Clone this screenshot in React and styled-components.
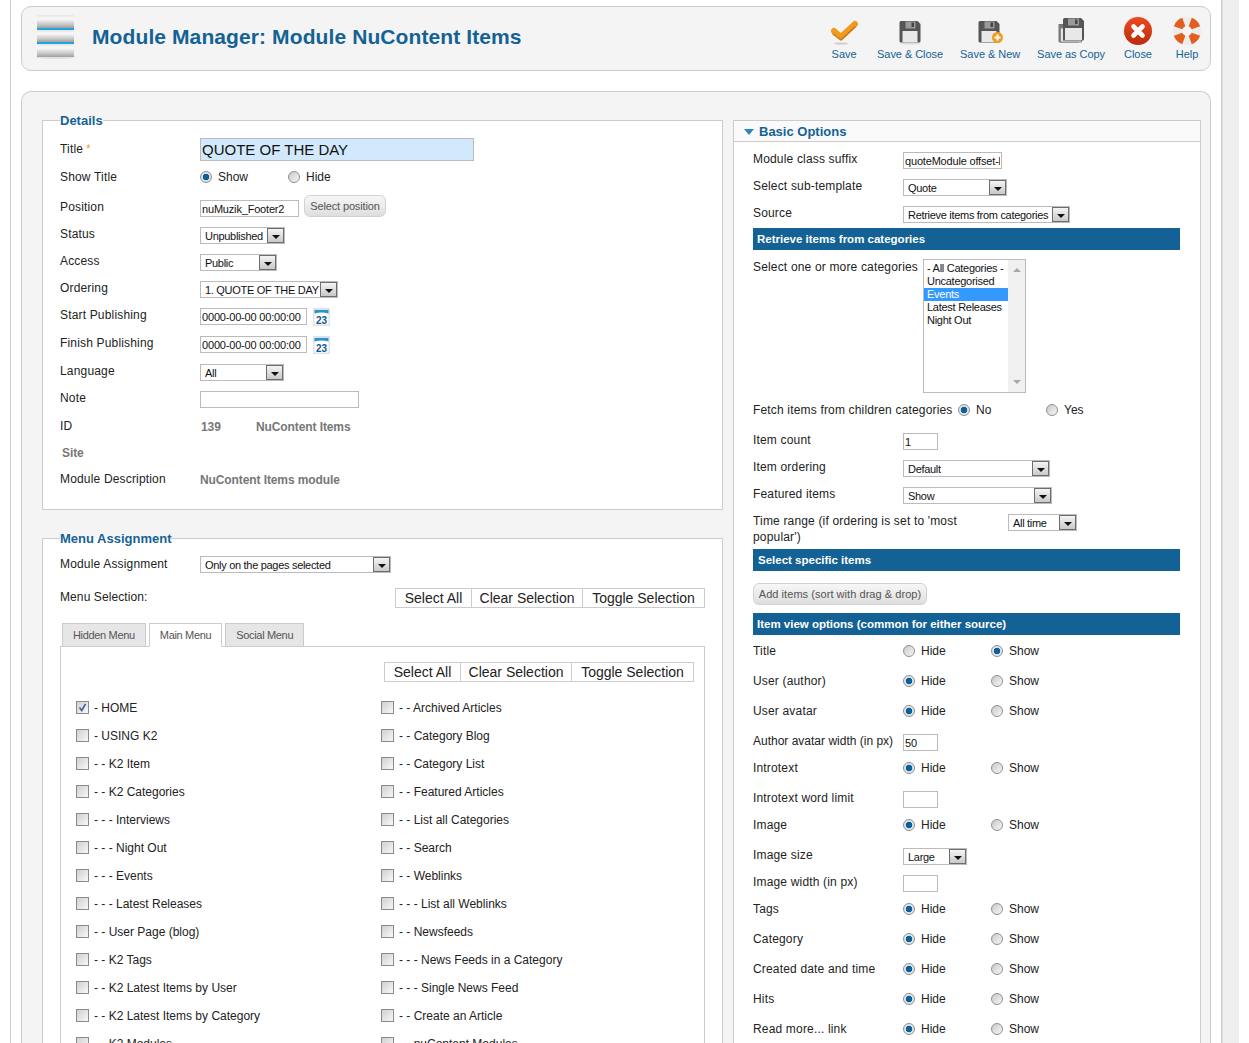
import styled, { createGlobalStyle } from 'styled-components';

const Global = createGlobalStyle`
  html, body { margin: 0; height: 1043px; overflow: hidden; background: #fff; }
  body { font: 12px/14px "Liberation Sans", Arial, sans-serif; color: #222; }
`;

const Shell = styled.div`
  display: flex;
  height: 1043px;
  overflow: hidden;
  padding-left: 10px;
  width: 1239px;
  box-sizing: border-box;
`;

const Main = styled.div`
  width: 1212px;
  flex: none;
  box-sizing: border-box;
  border-left: 1px solid #ccc;
  border-right: 1px solid #ccc;
  padding: 6px 10px 0;
`;

const Gutter = styled.div`
  flex: 1;
  background: #efefef;
  border-left: 1px solid #e2e2e2;
`;

const Toolbar = styled.header`
  height: 65px;
  box-sizing: border-box;
  display: flex;
  align-items: center;
  justify-content: space-between;
  padding: 0 7px 0 14px;
  background: #f4f4f4;
  border: 1px solid #ccc;
  border-radius: 10px;
`;

const PageTitle = styled.h1`
  display: flex;
  align-items: center;
  gap: 14px;
  margin: 0;
  padding-bottom: 4px;
  font-size: 21px;
  letter-spacing: 0.1px;
  line-height: 28px;
  color: #146295;
`;

const Tools = styled.div`
  display: flex;
  gap: 17px;
  padding-top: 1px;
`;

const Tool = styled.a`
  display: flex;
  flex-direction: column;
  align-items: center;
  min-width: 32px;
  font-size: 11px;
  letter-spacing: -0.05px;
  line-height: 13px;
  color: #146295;
  white-space: nowrap;
  svg { display: block; margin-bottom: 3px; }
`;

const Content = styled.main`
  margin-top: 20px;
  display: flex;
  gap: 10px;
  padding: 19px 10px 0 20px;
  background: #f4f4f4;
  border: 1px solid #ccc;
  border-bottom: 0;
  border-radius: 10px 10px 0 0;
  height: 1000px;
  box-sizing: border-box;
`;

const LeftCol = styled.div`
  width: 681px;
  flex: none;
`;

const Fieldset = styled.fieldset`
  margin: ${(p) => p.$top || 0}px 0 0;
  padding: 0 17px 0 17px;
  min-width: 0;
  background: #fff;
  border: 1px solid #ccc;
  height: ${(p) => p.$height || 'auto'};
  box-sizing: border-box;
`;

const Legend = styled.legend`
  padding: 2px 0 0;
  margin-bottom: -1px;
  font-size: 13px;
  line-height: 16px;
  font-weight: bold;
  color: #146295;
`;

const Row = styled.div`
  display: flex;
  align-items: ${(p) => (p.$free ? 'flex-start' : 'center')};
  height: ${(p) => (p.$free ? 'auto' : '20px')};
  margin-top: ${(p) => p.$gap ?? 7}px;
  ${(p) => !p.$free && 'label { line-height: 14px; }'}
`;

const Label = styled.label`
  flex: none;
  width: ${(p) => p.$w || 140}px;
  font-weight: ${(p) => (p.$muted ? 'bold' : 'normal')};
  color: ${(p) => (p.$muted ? '#777' : '#222')};
  padding-left: ${(p) => (p.$muted ? 2 : 0)}px;
  box-sizing: border-box;
  line-height: 16px;
  letter-spacing: ${(p) => (p.$muted ? '-0.1px' : p.$tight ? '0' : '0.17px')};
`;

const Star = styled.span`
  color: #f39c3d;
  margin-left: 3px;
`;

const Input = styled.input`
  display: block;
  box-sizing: border-box;
  height: ${(p) => p.$h || 17}px;
  width: ${(p) => p.$w}px;
  margin: ${(p) => p.$mt ?? 3}px 0 0;
  padding: 0 1px;
  background: ${(p) => p.$bg || '#fff'};
  border: 1px solid #bbb;
  border-radius: 0;
  outline: 0;
  font: ${(p) => p.$size || 11}px "Liberation Sans", Arial, sans-serif;
  letter-spacing: ${(p) => (p.$size ? 0 : '-0.18px')};
  color: #111;
`;

const SelectBox = styled.div`
  display: flex;
  align-items: center;
  justify-content: space-between;
  box-sizing: border-box;
  width: ${(p) => p.$w}px;
  height: 17px;
  margin-top: ${(p) => p.$mt ?? 3}px;
  padding-left: 4px;
  background: #fff;
  border: 1px solid #bbb;
  font-size: 11px;
  letter-spacing: -0.3px;
  color: #111;
  white-space: nowrap;
  overflow: hidden;
`;

const Arrow = styled.span`
  flex: none;
  width: 17px;
  height: 15px;
  box-sizing: border-box;
  display: flex;
  align-items: center;
  justify-content: center;
  padding-top: 3px;
  background: linear-gradient(#f4f4f4, #c9c9c9);
  border: 1px solid #6d6d6d;
  &::before {
    content: '';
    border: 4px solid transparent;
    border-top: 4px solid #111;
    border-bottom: 0;
  }
`;

const Select = ({ w, mt, children }) => (
  <SelectBox $w={w} $mt={mt}>
    {children}
    <Arrow />
  </SelectBox>
);

const RadioGroup = styled.div`
  display: flex;
  align-items: center;
`;

const RadioOption = styled.span`
  display: flex;
  align-items: center;
  gap: 6px;
  width: ${(p) => p.$w || 88}px;
`;

const RadioDot = styled.span`
  flex: none;
  width: 12px;
  height: 12px;
  box-sizing: border-box;
  border-radius: 50%;
  border: 1px solid #8f8f8f;
  background: ${(p) =>
    p.$on
      ? 'radial-gradient(circle, #0f5f98 0 3px, #dfe6ea 3.6px)'
      : 'linear-gradient(135deg, #c9c9c9, #f7f7f7)'};
`;

const Radios = ({ on, first = 'Hide', second = 'Show', w }) => (
  <RadioGroup>
    <RadioOption $w={w}>
      <RadioDot $on={on === 0} />
      {first}
    </RadioOption>
    <RadioOption $w={w}>
      <RadioDot $on={on === 1} />
      {second}
    </RadioOption>
  </RadioGroup>
);

const PillButton = styled.button`
  display: block;
  box-sizing: border-box;
  width: ${(p) => p.$w}px;
  height: 22px;
  padding: 0;
  background: linear-gradient(#f7f7f7, #dedede);
  border: 1px solid #d2d2d2;
  border-radius: 6px;
  font: 11px "Liberation Sans", Arial, sans-serif;
  letter-spacing: ${(p) => p.$spacing || 0}px;
  color: #555;
  white-space: nowrap;
`;

const PositionField = styled.div`
  display: flex;
  align-items: flex-end;
  gap: 5px;
  height: 22px;
  margin-top: -2px;
`;

const DateField = styled.div`
  display: flex;
  align-items: flex-start;
  gap: 6px;
  height: 17px;
  margin-top: 3px;
  svg { display: block; }
`;

const Muted = styled.span`
  font-weight: bold;
  letter-spacing: -0.1px;
  color: #777;
  padding-top: 2px;
  margin-left: ${(p) => p.$left || 0}px;
  width: ${(p) => p.$w || 'auto'};
`;

const SelectionRow = styled.div`
  display: flex;
  justify-content: space-between;
  margin-top: ${(p) => p.$gap}px;
`;

const ButtonGroup = styled.div`
  display: flex;
`;

const GroupButton = styled.button`
  height: 20px;
  box-sizing: border-box;
  width: ${(p) => p.$w}px;
  padding: 0;
  background: #fff;
  border: 1px solid #ccc;
  font: 14px "Liberation Sans", Arial, sans-serif;
  color: #222;
  & + & { margin-left: -1px; }
`;

const SelectionLabel = styled.span`
  padding-top: 1px;
  line-height: 16px;
  letter-spacing: 0.1px;
`;

const Tabs = styled.div`
  display: flex;
  gap: 3px;
  margin: 15px 0 -1px 2px;
`;

const Tab = styled.div`
  position: relative;
  height: 24px;
  box-sizing: border-box;
  padding: 4px 10px 0;
  font-size: 11px;
  letter-spacing: -0.33px;
  color: #555;
  background: ${(p) => (p.$active ? '#fff' : '#e6e6e6')};
  border: 1px solid #ccc;
  border-bottom-color: ${(p) => (p.$active ? '#fff' : '#ccc')};
`;

const TabPanel = styled.div`
  border: 1px solid #ccc;
  padding: 15px 10px 0 15px;
  height: 600px;
`;

const TabButtons = styled.div`
  display: flex;
  justify-content: flex-end;
`;

const CheckGrid = styled.div`
  display: grid;
  grid-template-columns: 305px 1fr;
  grid-auto-rows: 28px;
  margin-top: 11px;
`;

const CheckItem = styled.label`
  display: flex;
  align-items: center;
  gap: 5px;
`;

const CheckText = styled.span`
  padding-top: 2px;
`;

const CheckBox = styled.span`
  flex: none;
  display: flex;
  align-items: center;
  justify-content: center;
  width: 13px;
  height: 13px;
  box-sizing: border-box;
  border: 1px solid #8a8a8a;
  background: linear-gradient(135deg, #d0d0d0, #f8f8f8);
  svg { display: block; }
`;

const RightCol = styled.aside`
  width: 468px;
  flex: none;
  margin-top: 9px;
  box-sizing: border-box;
  background: #fff;
  border: 1px solid #ccc;
  border-bottom: 0;
  padding-bottom: 20px;
`;

const PanelHead = styled.h3`
  display: flex;
  align-items: center;
  gap: 5px;
  margin: 0;
  height: 21px;
  box-sizing: border-box;
  padding: 2px 0 0 10px;
  background: #fafafa;
  border-bottom: 1px solid #ccc;
  font-size: 13px;
  color: #146295;
  &::before {
    content: '';
    border: 5px solid transparent;
    border-top: 6px solid #2b87bd;
    border-bottom: 0;
  }
`;

const PanelBody = styled.div`
  padding: 0 20px 0 19px;
`;

const Banner = styled.div`
  height: 22px;
  margin-top: ${(p) => p.$gap}px;
  padding-left: ${(p) => p.$left || 4}px;
  background: #146295;
  color: #fff;
  font-size: 11.5px;
  font-weight: bold;
  line-height: 22px;
`;

const ListBox = styled.div`
  display: flex;
  box-sizing: border-box;
  width: 103px;
  height: 134px;
  border: 1px solid #bbb;
`;

const ListItems = styled.ul`
  flex: 1;
  margin: 0;
  padding: 2px 0 0;
  list-style: none;
  font-size: 11px;
  letter-spacing: -0.27px;
  line-height: 13px;
  color: #111;
`;

const ListItem = styled.li`
  padding-left: 3px;
  background: ${(p) => (p.$selected ? '#3399ff' : 'transparent')};
  color: ${(p) => (p.$selected ? '#fff' : '#111')};
  white-space: nowrap;
`;

const ScrollTrack = styled.div`
  width: 17px;
  flex: none;
  display: flex;
  flex-direction: column;
  justify-content: space-between;
  align-items: center;
  padding: 8px 0;
  box-sizing: border-box;
  background: #f0f0f0;
`;

const ScrollArrow = styled.span`
  border: 4px solid transparent;
  ${(p) => (p.$up ? 'border-bottom: 4px solid #a8a8a8; border-top: 0;' : 'border-top: 4px solid #a8a8a8; border-bottom: 0;')}
`;

const TimeLabel = styled(Label)`
  width: 215px;
  margin-right: 40px;
`;

const AddRow = styled.div`
  margin-top: 12px;
`;

const Logo = () => (
  <svg width="42" height="44" viewBox="0 0 42 44">
    <defs>
      <linearGradient id="bar" x1="0" y1="0" x2="0" y2="1">
        <stop offset="0" stopColor="#e4e4e4" />
        <stop offset="0.3" stopColor="#fafafa" />
        <stop offset="0.75" stopColor="#c4c4c4" />
        <stop offset="1" stopColor="#a0a0a0" />
      </linearGradient>
    </defs>
    <ellipse cx="19.5" cy="42" rx="20" ry="2" fill="#e2e2e2" />
    <rect x="1" y="0" width="37" height="13" fill="url(#bar)" />
    <rect x="1" y="13" width="37" height="2" fill="#1fa4dc" />
    <rect x="1" y="15" width="37" height="12" fill="url(#bar)" />
    <rect x="1" y="27" width="37" height="2" fill="#1fa4dc" />
    <rect x="1" y="29" width="37" height="13" fill="url(#bar)" />
  </svg>
);

const IconSave = () => (
  <svg width="32" height="28" viewBox="0 0 32 28">
    <ellipse cx="13" cy="26.5" rx="7" ry="1" fill="#ccc" />
    <path d="M6 14 L13 20 L27 7" fill="none" stroke="#f09a20" strokeWidth="6" strokeLinecap="round" strokeLinejoin="round" />
    <path d="M5 17 L13 23 L27 10" fill="none" stroke="#c9780f" strokeWidth="1.5" strokeLinecap="round" strokeLinejoin="round" />
  </svg>
);

const Floppy = ({ x = 0, y = 0 }) => (
  <g transform={`translate(${x} ${y})`}>
    <path d="M0 1.5 Q0 0 1.5 0 H18 L21 3 V20 Q21 21.5 19.5 21.5 H1.5 Q0 21.5 0 20 Z" fill="#555" />
    <rect x="3" y="10" width="15" height="11" fill="#e8e8e8" />
    <rect x="6" y="0.5" width="10" height="7" fill="#9a9a9a" />
    <rect x="12" y="1.5" width="2.5" height="4.5" fill="#444" />
  </g>
);

const IconFloppy = () => (
  <svg width="32" height="28" viewBox="0 0 32 28">
    <Floppy x={5.5} y={4} />
    <ellipse cx="16" cy="26.5" rx="10" ry="1" fill="#ddd" />
  </svg>
);

const IconFloppyNew = () => (
  <svg width="32" height="28" viewBox="0 0 32 28">
    <Floppy x={4.5} y={4} />
    <circle cx="23.5" cy="20.5" r="5.5" fill="#f09a20" />
    <path d="M20.5 20.5 H26.5 M23.5 17.5 V23.5" stroke="#fff" strokeWidth="2" />
  </svg>
);

const IconFloppyCopy = () => (
  <svg width="32" height="28" viewBox="0 0 32 28">
    <path d="M3.5 7 H24 V25.5 H5 Q3.5 25.5 3.5 24 Z" fill="#777" />
    <rect x="5.5" y="11" width="21" height="14" fill="#e4e4e4" stroke="#888" />
    <path d="M8 2.5 Q8 1 9.5 1 H26 L29 4 V22 Q29 23.5 27.5 23.5 H8 Z" fill="#555" />
    <rect x="10" y="11" width="17" height="12" fill="#e8e8e8" />
    <rect x="13" y="1.5" width="11" height="7" fill="#9a9a9a" />
    <rect x="20" y="2.5" width="2.5" height="4.5" fill="#444" />
  </svg>
);

const IconClose = () => (
  <svg width="32" height="28" viewBox="0 0 32 28">
    <defs>
      <linearGradient id="red" x1="0" y1="0" x2="0" y2="1">
        <stop offset="0" stopColor="#ee4a20" />
        <stop offset="1" stopColor="#b92c0c" />
      </linearGradient>
    </defs>
    <circle cx="16" cy="14" r="14" fill="url(#red)" />
    <path d="M11.5 9.5 L20.5 18.5 M20.5 9.5 L11.5 18.5" stroke="#fff" strokeWidth="4.6" strokeLinecap="round" />
  </svg>
);

const IconHelp = () => (
  <svg width="32" height="28" viewBox="0 0 32 28">
    <circle cx="16" cy="14" r="9.5" fill="none" stroke="#ececec" strokeWidth="9" />
    <g fill="none" stroke="#e2601f" strokeWidth="9">
      <path d="M19.25 5.07 A9.5 9.5 0 0 1 24.93 10.75" />
      <path d="M24.93 17.25 A9.5 9.5 0 0 1 19.25 22.93" />
      <path d="M12.75 22.93 A9.5 9.5 0 0 1 7.07 17.25" />
      <path d="M7.07 10.75 A9.5 9.5 0 0 1 12.75 5.07" />
    </g>
  </svg>
);

const IconCalendar = () => (
  <svg width="17" height="18" viewBox="0 0 17 18">
    <rect width="17" height="18" fill="#dfe3e6" />
    <rect x="1.5" y="2" width="14" height="14.5" fill="#fff" />
    <path d="M1.5 2 H15.5 V5.5 Q8.5 3.5 1.5 5.5 Z" fill="#2a92cf" />
    <text x="8.5" y="15.5" textAnchor="middle" fontFamily="Liberation Sans, Arial, sans-serif" fontSize="10" fontWeight="bold" fill="#0e5a8a">23</text>
  </svg>
);

const tools = [
  ['Save', IconSave],
  ['Save & Close', IconFloppy],
  ['Save & New', IconFloppyNew],
  ['Save as Copy', IconFloppyCopy],
  ['Close', IconClose],
  ['Help', IconHelp],
];

const menuLeft = [
  '- HOME', '- USING K2', '- - K2 Item', '- - K2 Categories', '- - - Interviews', '- - - Night Out', '- - - Events',
  '- - - Latest Releases', '- - User Page (blog)', '- - K2 Tags', '- - K2 Latest Items by User',
  '- - K2 Latest Items by Category', '- - K2 Modules',
];

const menuRight = [
  '- - Archived Articles', '- - Category Blog', '- - Category List', '- - Featured Articles', '- - List all Categories',
  '- - Search', '- - Weblinks', '- - - List all Weblinks', '- - Newsfeeds', '- - - News Feeds in a Category',
  '- - - Single News Feed', '- - Create an Article', '- - nuContent Modules',
];

const SelectionButtons = () => (
  <ButtonGroup>
    <GroupButton $w={77}>Select All</GroupButton>
    <GroupButton $w={112}>Clear Selection</GroupButton>
    <GroupButton $w={123}>Toggle Selection</GroupButton>
  </ButtonGroup>
);

const viewOptions = [
  ['Title', 1, 6],
  ['User (author)', 0, 10],
  ['User avatar', 0, 10],
  ['Author avatar width (in px)', '50', 10, true],
  ['Introtext', 0, 7],
  ['Introtext word limit', '', 10],
  ['Image', 0, 7],
  ['Image size', 'select', 10],
  ['Image width (in px)', '', 7],
  ['Tags', 0, 7],
  ['Category', 0, 10],
  ['Created date and time', 0, 10],
  ['Hits', 0, 10],
  ['Read more... link', 0, 10],
];

const ViewOption = ({ label, value, gap, tight }) => {
  let control;
  if (value === 'select') control = <Select w={64}>Large</Select>;
  else if (typeof value === 'string') control = <Input $w={35} value={value} readOnly />;
  else control = <Radios on={value} />;
  return (
    <Row $gap={gap}>
      <Label $w={150} $tight={tight}>{label}</Label>
      {control}
    </Row>
  );
};

export default function App() {
  return (
    <>
      <Global />
      <Shell>
        <Main>
          <Toolbar>
            <PageTitle>
              <Logo />
              Module Manager: Module NuContent Items
            </PageTitle>
            <Tools>
              {tools.map(([name, Icon]) => (
                <Tool key={name}>
                  <Icon />
                  {name}
                </Tool>
              ))}
            </Tools>
          </Toolbar>

          <Content>
            <LeftCol>
              <Fieldset $height="399px">
                <Legend>Details</Legend>
                <Row $gap={11}>
                  <Label>Title<Star>*</Star></Label>
                  <Input $w={274} $h={23} $mt={1} $size={15} $bg="#d2e9fd" value="QUOTE OF THE DAY" readOnly />
                </Row>
                <Row $gap={8}>
                  <Label>Show Title</Label>
                  <Radios on={0} first="Show" second="Hide" />
                </Row>
                <Row $gap={10}>
                  <Label>Position</Label>
                  <PositionField>
                    <Input $w={99} $mt={0} value="nuMuzik_Footer2" readOnly />
                    <PillButton $w={82} $spacing={-0.15}>Select position</PillButton>
                  </PositionField>
                </Row>
                <Row><Label>Status</Label><Select w={85}>Unpublished</Select></Row>
                <Row><Label>Access</Label><Select w={77}>Public</Select></Row>
                <Row><Label>Ordering</Label><Select w={138}>1. QUOTE OF THE DAY</Select></Row>
                <Row>
                  <Label>Start Publishing</Label>
                  <DateField><Input $w={107} $mt={0} value="0000-00-00 00:00:00" readOnly /><IconCalendar /></DateField>
                </Row>
                <Row $gap={8}>
                  <Label>Finish Publishing</Label>
                  <DateField><Input $w={107} $mt={0} value="0000-00-00 00:00:00" readOnly /><IconCalendar /></DateField>
                </Row>
                <Row $gap={8}><Label>Language</Label><Select w={84}>All</Select></Row>
                <Row><Label>Note</Label><Input $w={159} readOnly /></Row>
                <Row $gap={8}>
                  <Label>ID</Label>
                  <Muted $left={1} $w="55px">139</Muted>
                  <Muted>NuContent Items</Muted>
                </Row>
                <Row><Label $muted>Site</Label></Row>
                <Row $gap={6}>
                  <Label>Module Description</Label>
                  <Muted>NuContent Items module</Muted>
                </Row>
              </Fieldset>

              <Fieldset $top={19} $height="560px">
                <Legend>Menu Assignment</Legend>
                <Row $gap={8}>
                  <Label>Module Assignment</Label>
                  <Select w={191} mt={1}>Only on the pages selected</Select>
                </Row>
                <SelectionRow $gap={14}>
                  <SelectionLabel>Menu Selection:</SelectionLabel>
                  <SelectionButtons />
                </SelectionRow>
                <Tabs>
                  <Tab>Hidden Menu</Tab>
                  <Tab $active>Main Menu</Tab>
                  <Tab>Social Menu</Tab>
                </Tabs>
                <TabPanel>
                  <TabButtons><SelectionButtons /></TabButtons>
                  <CheckGrid>
                    {menuLeft.map((item, i) => [
                      <CheckItem key={item}>
                        <CheckBox>
                          {i === 0 && (
                            <svg width="9" height="9" viewBox="0 0 9 9">
                              <path d="M1.5 4.5 L3.8 7.5 L7.5 0.8" fill="none" stroke="#4a5a9c" strokeWidth="1.6" />
                            </svg>
                          )}
                        </CheckBox>
                        <CheckText>{item}</CheckText>
                      </CheckItem>,
                      <CheckItem key={menuRight[i]}>
                        <CheckBox />
                        <CheckText>{menuRight[i]}</CheckText>
                      </CheckItem>,
                    ])}
                  </CheckGrid>
                </TabPanel>
              </Fieldset>
            </LeftCol>

            <RightCol>
              <PanelHead>Basic Options</PanelHead>
              <PanelBody>
                <Row $gap={7}>
                  <Label $w={150}>Module class suffix</Label>
                  <Input $w={99} value="quoteModule offset-l" readOnly />
                </Row>
                <Row><Label $w={150}>Select sub-template</Label><Select w={104}>Quote</Select></Row>
                <Row><Label $w={150}>Source</Label><Select w={167}>Retrieve items from categories</Select></Row>
                <Banner $gap={5}>Retrieve items from categories</Banner>
                <Row $gap={9} $free>
                  <Label $w={170}>Select one or more categories</Label>
                  <ListBox>
                    <ListItems>
                      <ListItem>- All Categories -</ListItem>
                      <ListItem>Uncategorised</ListItem>
                      <ListItem $selected>Events</ListItem>
                      <ListItem>Latest Releases</ListItem>
                      <ListItem>Night Out</ListItem>
                    </ListItems>
                    <ScrollTrack>
                      <ScrollArrow $up />
                      <ScrollArrow />
                    </ScrollTrack>
                  </ListBox>
                </Row>
                <Row>
                  <Label $w={205}>Fetch items from children categories</Label>
                  <Radios on={0} first="No" second="Yes" />
                </Row>
                <Row $gap={10}><Label $w={150}>Item count</Label><Input $w={35} value="1" readOnly /></Row>
                <Row><Label $w={150}>Item ordering</Label><Select w={147}>Default</Select></Row>
                <Row><Label $w={150}>Featured items</Label><Select w={149}>Show</Select></Row>
                <Row $gap={9} $free>
                  <TimeLabel>Time range (if ordering is set to 'most popular')</TimeLabel>
                  <Select w={69} mt={1}>All time</Select>
                </Row>
                <Banner $gap={4} $left={5}>Select specific items</Banner>
                <AddRow><PillButton $w={174} $spacing={0.05}>Add items (sort with drag &amp; drop)</PillButton></AddRow>
                <Banner $gap={8}>Item view options (common for either source)</Banner>
                {viewOptions.map(([label, value, gap, tight]) => (
                  <ViewOption key={label} label={label} value={value} gap={gap} tight={tight} />
                ))}
              </PanelBody>
            </RightCol>
          </Content>
        </Main>
        <Gutter />
      </Shell>
    </>
  );
}
